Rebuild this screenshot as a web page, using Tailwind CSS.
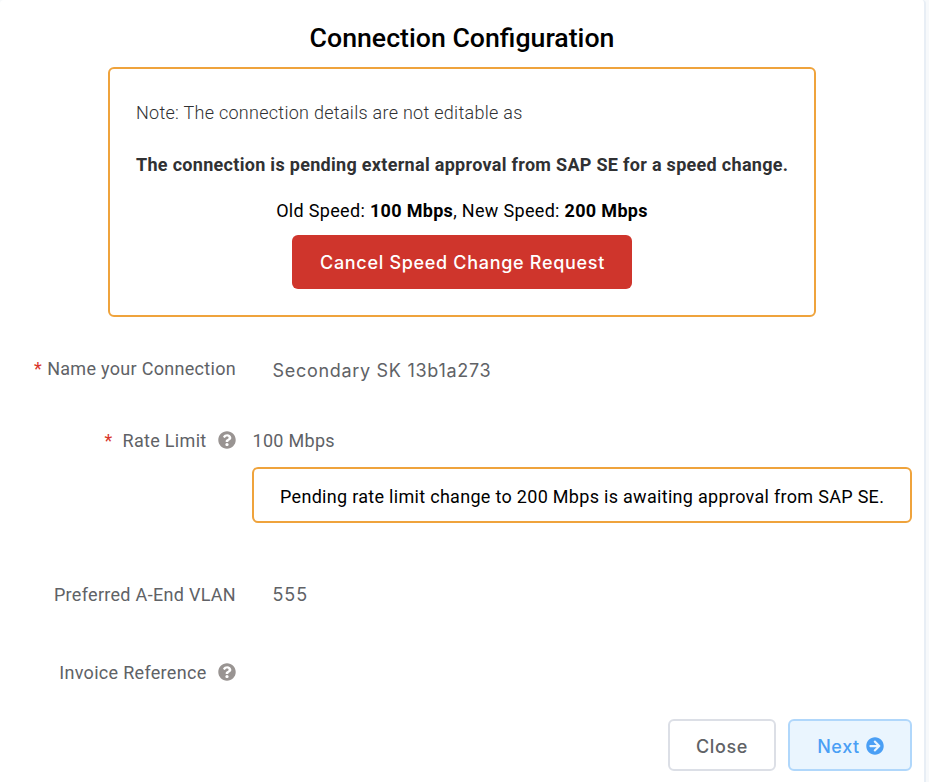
<!DOCTYPE html>
<html lang="en">
<head>
<meta charset="utf-8">
<title>Connection Configuration</title>
<script src="https://cdn.jsdelivr.net/npm/@tailwindcss/browser@4"></script>
</head>
<body class="h-[782px] overflow-hidden bg-[#f7f9fb] font-['Roboto',sans-serif] text-[18px] leading-6 tracking-[0.3px] text-[#606266] whitespace-nowrap">
<svg class="hidden">
  <symbol id="help" viewBox="0 0 512 512"><path d="M504 256c0 136.997-111.043 248-248 248S8 392.997 8 256C8 119.083 119.043 8 256 8s248 111.083 248 248zM262.655 90c-54.497 0-89.255 22.957-116.549 63.758-3.536 5.286-2.353 12.415 2.715 16.258l34.699 26.31c5.205 3.947 12.621 3.008 16.665-2.122 17.864-22.658 30.113-35.797 57.303-35.797 20.429 0 45.698 13.148 45.698 32.958 0 14.976-12.363 22.667-32.534 33.976C247.128 238.528 216 254.941 216 296v4c0 6.627 5.373 12 12 12h56c6.627 0 12-5.373 12-12v-1.333c0-28.462 83.186-29.647 83.186-106.667 0-58.002-60.165-102-116.531-102zM256 338c-25.365 0-46 20.635-46 46 0 25.364 20.635 46 46 46s46-20.636 46-46c0-25.365-20.635-46-46-46z"/></symbol>
  <symbol id="next" viewBox="0 0 512 512"><path d="M256 8c137 0 248 111 248 248S393 504 256 504 8 393 8 256 119 8 256 8zm-28.900 143.600l75.500 72.400H120c-13.300 0-24 10.700-24 24v16c0 13.300 10.700 24 24 24h182.600l-75.500 72.400c-9.700 9.300-9.900 24.800-.4 34.300l11 10.900c9.400 9.400 24.600 9.400 33.900 0L404.300 273c9.400-9.400 9.400-24.600 0-33.900L271.600 106.300c-9.400-9.400-24.600-9.400-33.900 0l-11 10.900c-9.500 9.600-9.300 25.100.4 34.400z"/></symbol>
</svg>
<main class="flex h-full w-[926px] flex-col border-r-2 border-[#e8eef5] bg-white rounded-t-sm">
  <h1 class="mt-[22px] text-center text-[26.7px] leading-8 font-medium tracking-normal text-black">Connection Configuration</h1>
  <section class="mx-[108px] mt-[13px] flex h-[250px] flex-col items-center rounded-md border-2 border-[#efa33c] px-[26px] pt-[32px] text-black">
    <p class="self-start font-light tracking-[0.28px] text-[#303133]">Note: The connection details are not editable as</p>
    <p class="mt-7 self-start font-bold text-[#303133]">The connection is pending external approval from SAP SE for a speed change.</p>
    <p class="mt-[22px] tracking-[0.32px]">Old Speed: <b>100 Mbps</b>, New Speed: <b>200 Mbps</b></p>
    <button class="mt-3 h-[54px] w-[340px] rounded-md bg-[#cf352c] pt-0.5 pl-px font-['Inter',sans-serif] font-medium tracking-[0.69px] text-white">Cancel Speed Change Request</button>
  </section>
  <div class="mt-10 flex h-6">
    <label class="w-[236px] text-right"><span class="mr-[5px] text-[#d9362c]">*</span>Name your Connection</label>
    <span class="ml-[36.5px] mt-0.5 font-['Inter',sans-serif] tracking-[0.7px]">Secondary SK 13b1a273</span>
  </div>
  <div class="mt-12 flex h-6 items-center">
    <label class="flex w-[236px] items-center justify-end"><span class="mr-[10px] text-[#d9362c]">*</span>Rate Limit<svg class="mb-0.5 ml-[11.5px] size-[18px] fill-[#999492]"><use href="#help"/></svg></label>
    <span class="ml-[16.5px]">100 Mbps</span>
  </div>
  <div class="mt-[14px] ml-[252px] flex h-14 w-[660px] items-center rounded-md border-2 border-[#efa33c] px-[26px] pt-[3px] text-black">Pending rate limit change to 200 Mbps is awaiting approval from SAP SE.</div>
  <div class="mt-[60px] flex h-6">
    <label class="w-[236px] text-right">Preferred A-End VLAN</label>
    <span class="ml-[36.5px] font-['Inter',sans-serif] tracking-[0.9px]">555</span>
  </div>
  <div class="mt-[54px] flex h-6 items-center">
    <label class="flex w-[236px] items-center justify-end">Invoice Reference<svg class="mb-0.5 ml-[11.5px] size-[18px] fill-[#999492]"><use href="#help"/></svg></label>
  </div>
  <footer class="mt-[34px] flex justify-end gap-3 pr-3 font-['Inter',sans-serif] font-medium tracking-[0.6px]">
    <button class="h-[52px] w-[108px] rounded-md border-2 border-[#dcdfe6] pt-[3px]">Close</button>
    <button class="flex h-[52px] w-[124px] items-center justify-center gap-1.5 rounded-md border-2 border-[#b0d7fb] bg-[#eaf5fe] pl-px text-[#4a9ff5]"><span class="pt-[3px]">Next</span><svg class="mt-0.5 size-[18px] fill-current"><use href="#next"/></svg></button>
  </footer>
</main>
</body>
</html>
